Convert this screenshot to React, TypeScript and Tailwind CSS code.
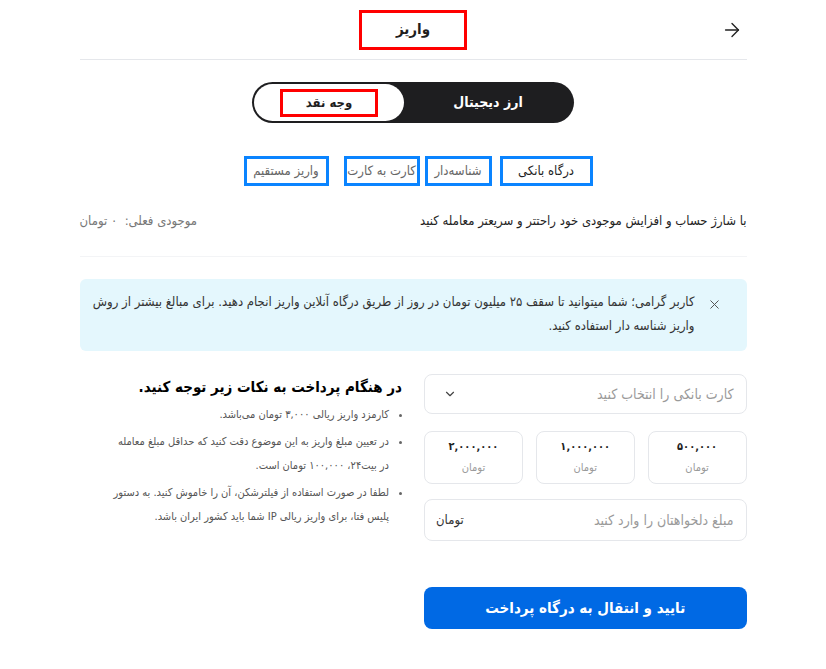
import React, { useState } from 'react';
import { ArrowRight, ChevronDown, X } from 'lucide-react';

const tabs = [
  { label: 'درگاه بانکی', w: 'w-[93px]', ml: 'ml-2' },
  { label: 'شناسه‌دار', w: 'w-[67px]', ml: 'ml-[5px]' },
  { label: 'کارت به کارت', w: 'w-[76px]', ml: 'ml-[15px]' },
  { label: 'واریز مستقیم', w: 'w-[85px]', ml: '' },
];

const amounts = ['۵۰۰,۰۰۰', '۱,۰۰۰,۰۰۰', '۲,۰۰۰,۰۰۰'];

const App: React.FC = () => {
  const [tab, setTab] = useState(0);
  const [showAlert, setShowAlert] = useState(true);
  return <div dir="rtl" className="min-h-screen bg-white font-['DejaVu_Sans_Condensed','DejaVu_Sans',sans-serif] text-[#1f1f1f]">
      <div className="mx-auto w-[667px]">
        {/* Header */}
        <div className="flex h-[60px] items-center justify-between border-b border-gray-200">
          <div className="w-6 pr-1 text-[#222]">
            <ArrowRight size={22} strokeWidth={1.5} />
          </div>
          <div className="flex h-10 w-[108px] items-center justify-center border-[3px] border-[#ff0000] text-[15px] font-bold">
            واریز
          </div>
          <div className="w-6" />
        </div>

        {/* Currency toggle */}
        <div className="mx-auto mt-[22px] flex h-[41px] w-[322px] items-center rounded-full bg-[#1e1e20] p-[2px]">
          <div className="flex flex-1 items-center justify-center text-[14px] font-bold text-white">ارز دیجیتال</div>
          <div className="flex h-full w-[150px] items-center justify-center rounded-full bg-white">
            <div className="flex h-7 w-[98px] items-center justify-center border-[3px] border-[#ff0000] text-[13px] font-bold">
              وجه نقد
            </div>
          </div>
        </div>

        {/* Tabs */}
        <div className="mt-[33px] flex justify-center pl-[10px]">
          {tabs.map((t, i) => <button key={t.label} onClick={() => setTab(i)} className={`flex h-[30px] ${t.w} ${t.ml} items-center justify-center whitespace-nowrap border-[3px] border-[#0a84ff] text-[13px] ${tab === i ? 'text-[#1f1f1f]' : 'text-[#666]'}`}>
              {t.label}
            </button>)}
        </div>

        {/* Balance */}
        <div className="flex h-[71px] items-center justify-between border-b border-gray-100 text-[13px]">
          <span>با شارژ حساب و افزایش موجودی خود راحتتر و سریعتر معامله کنید</span>
          <span className="text-[#777]">موجودی فعلی:&nbsp; ۰ تومان</span>
        </div>

        {/* Alert */}
        {showAlert && <div className="mt-[22px] flex h-[72px] items-start gap-3 rounded-md bg-[#e4f7fd] pl-4 pr-[25px] pt-[11px]">
            <button onClick={() => setShowAlert(false)} className="mt-[7px] shrink-0 text-[#555]">
              <X size={15} strokeWidth={1.6} />
            </button>
            <p className="whitespace-nowrap text-[13px] leading-6 text-[#333]">
              کاربر گرامی؛ شما میتوانید تا سقف ۲۵ میلیون تومان در روز از طریق درگاه آنلاین واریز انجام دهید. برای مبالغ بیشتر از روش
              <br />
              واریز شناسه دار استفاده کنید.
            </p>
          </div>}

        {/* Form + notes */}
        <div className="mt-[23px] grid grid-cols-2 gap-[22px]">
          <div>
            <div className="flex h-10 items-center justify-between rounded-lg border border-gray-200 pl-[18px] pr-3">
              <span className="text-[14px] text-[#9a9a9a]">کارت بانکی را انتخاب کنید</span>
              <ChevronDown size={14} className="text-[#444]" />
            </div>
            <div className="mt-[17px] grid grid-cols-3 gap-[13px]">
              {amounts.map(a => <div key={a} className="flex h-[53px] flex-col items-center justify-center gap-1 rounded-lg border border-gray-200">
                  <span className="text-[11px] font-bold">{a}</span>
                  <span className="text-[11px] text-[#9a9a9a]">تومان</span>
                </div>)}
            </div>
            <div className="mt-[15px] flex h-[42px] items-center justify-between rounded-lg border border-gray-200 pl-[11px] pr-3">
              <span className="text-[14px] text-[#9a9a9a]">مبلغ دلخواهتان را وارد کنید</span>
              <span className="text-[13px] text-[#333]">تومان</span>
            </div>
            <button className="mt-[46px] flex h-[42px] w-full items-center justify-center rounded-lg bg-[#0069e4] text-[15px] font-bold text-white">
              تایید و انتقال به درگاه پرداخت
            </button>
          </div>
          <div className="pt-[1px]">
            <h3 className="text-[15px] font-bold leading-6 text-black">در هنگام پرداخت به نکات زیر توجه کنید.</h3>
            <ul className="mt-[4px] list-disc space-y-[3px] pr-[13px] text-[11px] leading-6 text-[#555] marker:text-[#666]">
              <li>کارمزد واریز ریالی ۳,۰۰۰ تومان می‌باشد.</li>
              <li className="whitespace-nowrap">در تعیین مبلغ واریز به این موضوع دقت کنید که حداقل مبلغ معامله<br />در بیت۲۴، ۱۰۰,۰۰۰ تومان است.</li>
              <li className="whitespace-nowrap">لطفا در صورت استفاده از فیلترشکن، آن را خاموش کنید. به دستور<br />پلیس فتا، برای واریز ریالی IP شما باید کشور ایران باشد.</li>
            </ul>
          </div>
        </div>
      </div>
    </div>;
};

export default App;
